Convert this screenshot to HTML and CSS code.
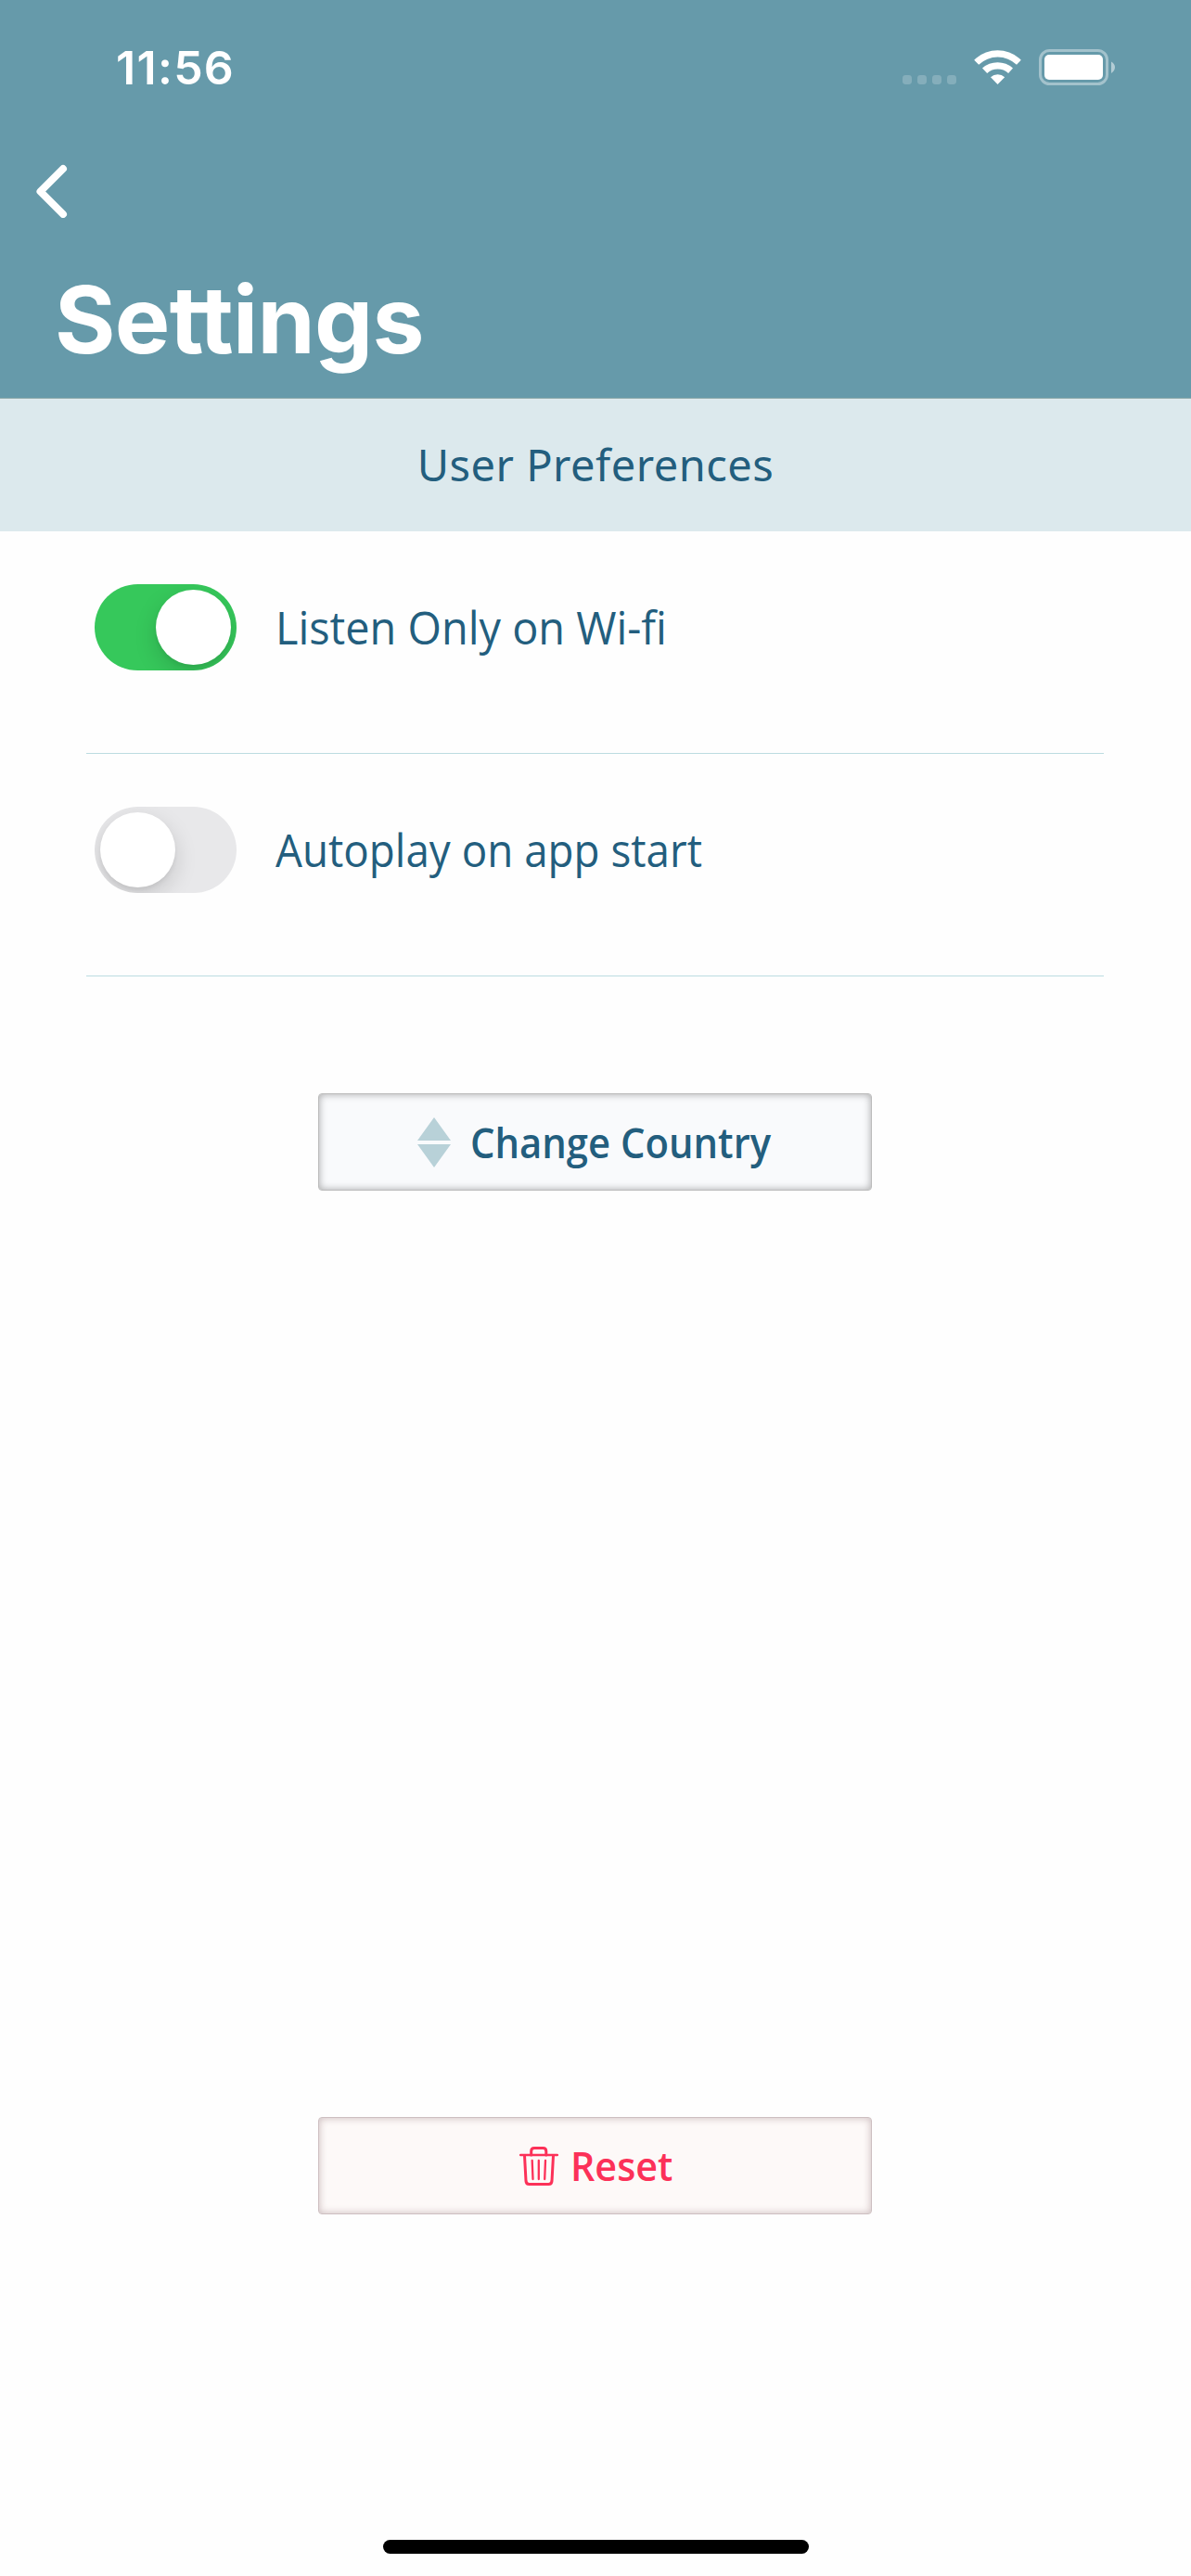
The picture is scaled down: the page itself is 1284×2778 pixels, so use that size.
FILE: index.html
```html
<!DOCTYPE html>
<html lang="en">
<head>
<meta charset="utf-8">
<title>Settings</title>
<link rel="stylesheet" href="styles.css">
</head>
<body>
<header class="header">
  <div class="status">
    <span class="time">11:56</span>
    <svg class="status-icons" width="230" height="40" viewBox="0 0 230 40" fill="#fff">
      <g opacity=".2"><rect x="0" y="28" width="10" height="10" rx="3.4"/><rect x="16" y="28" width="10" height="10" rx="3.4"/><rect x="32" y="28" width="10" height="10" rx="3.4"/><rect x="48" y="28" width="10" height="10" rx="3.4"/></g>
      <path d="M77.2 11.8Q78 10.800 79 9.900A36.500 36.500 0 0 1 126 9.900Q127 10.800 127.800 11.800L123 16.700A29.500 29.500 0 0 0 82.200 16.700Z"/>
      <path d="M86 20.600A24.500 24.500 0 0 1 119 20.600L114.100 25.900A17 17 0 0 0 91.200 25.900Z"/>
      <path d="M95 30.200A11.500 11.500 0 0 1 110.200 30.200L102.500 38Z"/>
      <rect x="148.500" y="1.500" width="72" height="36" rx="10" fill="none" stroke="#fff" stroke-width="3" opacity=".4"/>
      <rect x="153" y="6" width="63" height="27" rx="5"/>
      <path d="M225 13.500Q229 16 229 19.500T225 26Z" opacity=".5"/>
    </svg>
  </div>
  <a class="back" aria-label="Back"><svg width="34" height="58" viewBox="0 0 34 58"><path d="M29 5L4.500 29.500L29 54" fill="none" stroke="#fff" stroke-width="8" stroke-linecap="round" stroke-linejoin="round"/></svg></a>
  <h1 class="title">Settings</h1>
</header>
<h2 class="section">User Preferences</h2>
<main class="content">
  <div class="row"><span class="toggle on"><i class="knob"></i></span><span class="label listen">Listen Only on Wi-fi</span></div>
  <div class="row"><span class="toggle"><i class="knob"></i></span><span class="label autoplay">Autoplay on app start</span></div>
  <button class="button country">
    <svg width="36" height="54" viewBox="0 0 36 54" fill="#b8d1d8"><path d="M18 0L36 25H0ZM0 29H36L18 54Z"/></svg>
    <span class="country-text">Change Country</span>
  </button>
  <button class="button reset">
    <svg width="42" height="42" viewBox="0 0 42 42" fill="none" stroke="#fc3158" stroke-linecap="round" stroke-linejoin="round"><path d="M1.200 9H40.800" stroke-width="2.500"/><path d="M12.700 9V5Q12.700 1.500 16 1.500H25.500Q28.800 1.500 28.800 5V9M5.500 9.500L7 37Q7.300 40.500 10.500 40.500H31.500Q34.700 40.500 35 37L36.500 9.500" stroke-width="3"/><path d="M13.700 15L14.500 35M20.800 15V35M28 15L27.200 35" stroke-width="2.300"/></svg>
    <span class="reset-text">Reset</span>
  </button>
</main>
<footer class="home"></footer>
</body>
</html>
```
FILE: styles.css
```css
* { box-sizing: border-box; }
body {
  margin: 0; width: 1284px; height: 2778px; overflow: hidden;
  display: flex; flex-direction: column; background: #fefefe;
  color: #235e7e; font-family: "Open Sans", sans-serif;
}
.header {
  height: 430px; background: #669aaa; border-bottom: 1px solid #8eaaaa; color: #fff;
  font-family: Inter, sans-serif; padding-top: 43px; flex: none;
}
.status { display: flex; justify-content: space-between; align-items: flex-start; height: 134px; padding: 0 81px 0 125px; }
.time { font-size: 50px; line-height: 60px; font-weight: 600; letter-spacing: 1.3px; }
.status-icons { margin-top: 10px; }
.back { display: block; height: 58px; padding-left: 39px; }
.back svg { display: block; }
.title { margin: 50px 0 0 59px; font-size: 100px; line-height: 120px; font-weight: 700; letter-spacing: -.7px; white-space: nowrap; }
.section {
  margin: 0; height: 143px; flex: none; background: #dce9ed; text-align: center;
  font-family: "Noto Sans", sans-serif; font-size: 47px; font-weight: 400; line-height: 143px; letter-spacing: .5px;
}
.content { flex: 1; display: flex; flex-direction: column; align-items: center; }
.row {
  width: 1097px; height: 240px; padding: 57px 0 0 9px; border-bottom: 1px solid #bcdce1;
  display: flex; align-items: flex-start; margin-left: -1px; flex: none;
}
.toggle { width: 153px; height: 93px; border-radius: 47px; background: #e8e8ea; padding: 6px; display: flex; overflow: hidden; flex: none; }
.toggle.on { background: #36c85b; justify-content: flex-end; }
.knob { width: 81px; height: 81px; border-radius: 50%; background: #fff; box-shadow: 0 9px 24px rgba(0,0,0,.15), 0 3px 4px rgba(0,0,0,.05); }
.label { margin-left: 42px; line-height: 93px; font-size: 49px; white-space: nowrap; transform-origin: left; }
.listen { transform: scaleX(.956); }
.autoplay { transform: scaleX(.934); }
.button {
  width: 597px; height: 105px; border: 1px solid #bbb; border-radius: 4px; padding: 0;
  display: flex; align-items: center; justify-content: flex-start; flex: none; margin-right: 2px;
  font-family: "Open Sans", sans-serif; font-weight: 600; white-space: nowrap;
}
.button span { transform-origin: left; }
.country { margin-top: 126px; padding-left: 106px; gap: 21px; background: #f9fafc; color: #235e7e; font-size: 45px; box-shadow: inset 0 0 8px rgba(0,0,0,.34); }
.country-text { transform: scaleX(.929); }
.reset { margin-top: 999px; padding-left: 216px; gap: 13px; background: #fdf9f8; color: #fc3158; font-size: 43px; border-color: #cdbfc1; box-shadow: inset 0 0 8px rgba(70,20,30,.28); }
.reset-text { transform: scaleX(.96); }
.home { width: 459px; height: 15px; border-radius: 8px; background: #000; margin: 0 auto 24px 413px; flex: none; }
```
